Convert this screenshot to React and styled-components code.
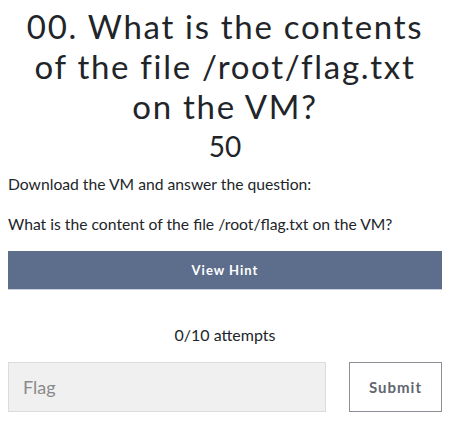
import React from "react";
import styled, {createGlobalStyle} from "styled-components";

const GlobalStyle = createGlobalStyle`
  body {
    margin: 0;
    background: #ffffff;
    font-family: "Lato", "Liberation Sans", sans-serif;
    color: #212529;
  }
`;

const App = () => {
    return (
        <>
            <GlobalStyle/>
            <Container>
                <Title>00. What is the contents of the file /root/flag.txt on the VM?</Title>
                <Points>50</Points>
                <Description>
                    <p>Download the VM and answer the question:</p>
                    <p>What is the content of the file /root/flag.txt on the VM?</p>
                </Description>
                <HintButton>View Hint</HintButton>
                <Attempts>0/10 attempts</Attempts>
                <SubmitRow>
                    <FlagInput placeholder="Flag"/>
                    <SubmitButton>Submit</SubmitButton>
                </SubmitRow>
            </Container>
        </>
    );
};

const Container = styled.div`
  width: 434px;
  padding: 0 8px;
  display: flex;
  flex-direction: column;
`;

const Title = styled.h3`
  margin: 6px 0 0 0;
  padding: 0 6px;
  font-family: "Lato", sans-serif;
  font-weight: 400;
  font-size: 33px;
  line-height: 40px;
  letter-spacing: 1.7px;
  text-align: center;
  color: #212529;
`;

const Points = styled.h4`
  margin: 3px 0 0 0;
  font-size: 28px;
  font-weight: 400;
  line-height: 34px;
  text-align: center;
`;

const Description = styled.div`
  margin-top: 9px;
  font-size: 15.7px;
  line-height: 24px;

  p {
    margin: 0 0 16px 0;
  }

  p:last-child {
    margin-bottom: 0;
  }
`;

const HintButton = styled.button`
  margin-top: 15px;
  height: 39px;
  width: 100%;
  border: none;
  border-bottom: 1px solid #c9d0dc;
  background-color: #5c6e8c;
  color: #ffffff;
  font-family: "Lato", sans-serif;
  font-size: 13px;
  font-weight: 700;
  letter-spacing: 1px;
`;

const Attempts = styled.p`
  margin: 35px 0 0 0;
  text-align: center;
  font-size: 16px;
  line-height: 20px;
`;

const SubmitRow = styled.div`
  margin-top: 17px;
  display: flex;
  justify-content: space-between;
`;

const FlagInput = styled.input`
  box-sizing: border-box;
  width: 318px;
  height: 50px;
  padding: 0 14px;
  background-color: #f0f0f0;
  border: 1px solid #dcdcdc;
  font-family: "Lato", sans-serif;
  font-size: 18px;
  color: #495057;
  outline: none;

  &::placeholder {
    color: #8a8a8a;
  }
`;

const SubmitButton = styled.button`
  box-sizing: border-box;
  width: 93px;
  height: 50px;
  background-color: #ffffff;
  border: 1px solid #8a8f96;
  color: #5f6670;
  font-family: "Lato", sans-serif;
  font-size: 15px;
  font-weight: 700;
  letter-spacing: 1px;
`;

export default App;
